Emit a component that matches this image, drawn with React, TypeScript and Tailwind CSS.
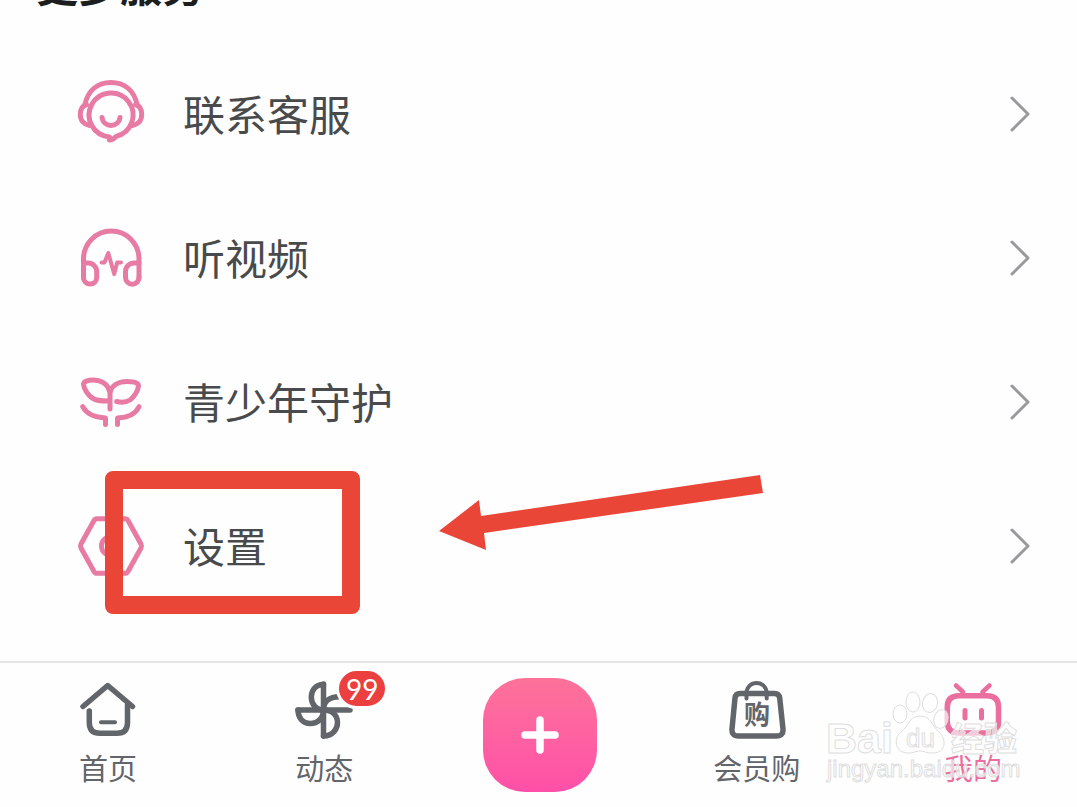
import type { ReactNode } from "react";

const iconProps = {
  fill: "none",
  stroke: "currentColor",
  strokeLinecap: "round" as const,
  strokeLinejoin: "round" as const,
  "aria-hidden": true,
};

function RowIcon({ children }: { children: ReactNode }) {
  return (
    <svg viewBox="0 0 66 66" strokeWidth={5} className="size-[66px] shrink-0 overflow-visible text-[#e87ba4]" {...iconProps}>
      {children}
    </svg>
  );
}

function NavIcon({ children }: { children: ReactNode }) {
  return (
    <svg viewBox="0 0 60 60" strokeWidth={5.5} className="size-[60px] overflow-visible" {...iconProps}>
      {children}
    </svg>
  );
}

function ServiceIcon() {
  return (
    <RowIcon>
      <path d="M31.500 59 V55.900 A22 22 0 1 1 38 55.400 Q36 58.500 31.500 59" />
      <path d="M6.800 24 C10 9 20 1.500 33 1.500 S56 9 59.200 24" />
      <path d="M8.500 23.500 C3.800 25 2.300 29 2.300 33.500 C2.300 39.500 6 43.500 11.500 44.500" />
      <path d="M57.500 23.500 C62.200 25 63.700 29 63.700 33.500 C63.700 39.500 60 43.500 54.500 44.500" />
      <path d="M24 36.500 C25.500 47 40.500 47 42 36.500" />
    </RowIcon>
  );
}

function HeadphoneIcon() {
  return (
    <RowIcon>
      <path d="M5.500 53 V34 a27.700 28 0 0 1 55.500 0 V53" />
      <path d="M5.500 38 H10 A8.500 8.500 0 0 1 18.700 46.500 V52.500 A6.600 6.600 0 0 1 5.500 52.500" />
      <path d="M61 38 H56.500 A8.500 8.500 0 0 0 47.500 46.500 V52.500 A6.700 6.700 0 0 0 61 52.500" />
      <path strokeWidth={4} d="M23.500 37.500 H26.500 L30.300 28 L36.200 49 L39.200 37.500 H43" />
    </RowIcon>
  );
}

function SproutIcon() {
  return (
    <RowIcon>
      <path d="M32 40 V23 C29.500 14 22 11 15 11 C10 11 5.500 12.500 5.500 15.500 C6 20 10 26.500 15 29.500 C19 32 24 32 29.500 32" />
      <path d="M32 23 C34 16 41 12.500 49 12.500 C55 12.500 60.500 13.500 60.500 17 C60 22 56 28 52 31 C48 33.500 43 33.500 38.700 32.500" />
      <path d="M4.700 37.700 C8 44 15 48.500 27.500 49 V55.500" />
      <path d="M61 37.700 C58 44 51 48.500 39.500 49 V55.500" />
    </RowIcon>
  );
}

function SettingsIcon() {
  return (
    <RowIcon>
      <path d="M19 5.700 H47 Q49 5.700 50 7.500 L63 31 Q64 33 63 35 L50 58.500 Q49 60.300 47 60.300 H19 Q17 60.300 16 58.500 L3 35 Q2 33 3 31 L16 7.500 Q17 5.700 19 5.700 Z" />
      <circle cx="33" cy="33" r="9.500" />
    </RowIcon>
  );
}

function HomeIcon() {
  return (
    <NavIcon>
      <path d="M5 25.500 L29.700 4.500 L54.500 25.500" />
      <path d="M11.300 30 V41.500 Q11.300 52.300 22 52.300 H39 Q49.500 52.300 49.500 41.500 V24" />
      <path strokeWidth={4} d="M23 41.300 H37" />
    </NavIcon>
  );
}

function FanIcon() {
  return (
    <NavIcon>
      <path d="M29.500 3 V55" />
      <path d="M4 29 H56" />
      <path d="M29.500 3.500 C21 3.500 17.300 10 17.300 16 C17.300 23 22 29 29.500 29" />
      <path d="M29.500 55 C39 55 43.500 48 43.500 41.500 C43.500 34 38 29 29.500 29" />
      <path d="M4 29 C4 37 9 42.500 16 42.500 C24 42.500 29.500 37 29.500 29" />
      <path d="M29.500 29 C29.500 20 36 15.700 45 15.700" />
    </NavIcon>
  );
}

function BagIcon() {
  return (
    <NavIcon>
      <path d="M13 12.500 H47.500 Q52 12.500 52.700 17 L56 48 Q56.500 55 49.500 55 H11.500 Q4.500 55 5 48 L8 17 Q8.500 12.500 13 12.500 Z" />
      <path strokeWidth={4} d="M19.500 17.500 V12.500 C19.500 -1.500 39.700 -1.500 39.700 12.500 V17.500" />
      <text x="30" y="43" textAnchor="middle" fill="currentColor" stroke="none" className="font-['Noto_Sans_CJK_SC',sans-serif] text-[26px] font-bold">购</text>
    </NavIcon>
  );
}

function TvIcon() {
  return (
    <NavIcon>
      <path strokeWidth={4.5} d="M13 4.500 L20 11 M46.500 4.500 L39.500 11" />
      <path d="M16 14.700 H44 Q55.500 14.700 55.500 26 V40.500 Q55.500 52 44 52 H16 Q4.300 52 4.300 40.500 V26 Q4.300 14.700 16 14.700 Z" />
      <path strokeWidth={5} d="M22 29.500 V37 M38.500 29.500 V37" />
    </NavIcon>
  );
}

function Watermark() {
  return (
    <svg
      viewBox="0 0 200 100"
      className="pointer-events-none absolute right-[50px] bottom-[12px] h-[100px] w-[200px] overflow-visible"
      fill="#ffffff"
      fillOpacity={0.65}
      stroke="#dedede"
      strokeWidth={1}
      aria-hidden="true"
    >
      <text x="-1" y="58" className="font-['Liberation_Sans',sans-serif] text-[43px] font-bold">Bai</text>
      <ellipse cx="73" cy="19" rx="7" ry="9" />
      <ellipse cx="86" cy="7" rx="7" ry="10" />
      <ellipse cx="103" cy="8" rx="7.5" ry="9.5" transform="rotate(12 103 8)" />
      <ellipse cx="114" cy="24" rx="7" ry="9.5" transform="rotate(16 114 24)" />
      <path d="M93 21 C82 21 81 32 74 37 C66 43 68 58 81 58 C87 58 89 56 93 56 C97 56 99 58 106 58 C119 58 120 44 112 37 C105 31 104 21 93 21 Z" />
      <text x="79" y="52" className="font-['Liberation_Sans',sans-serif] text-[26px]">du</text>
      <text x="124" y="56" className="font-['Noto_Sans_CJK_SC',sans-serif] text-[33px] font-black">经验</text>
      <text x="0" y="82" className="font-['Liberation_Sans',sans-serif] text-[24px]">jingyan.baidu.com</text>
    </svg>
  );
}

const rows = [
  { label: "联系客服", icon: <ServiceIcon /> },
  { label: "听视频", icon: <HeadphoneIcon /> },
  { label: "青少年守护", icon: <SproutIcon /> },
  { label: "设置", icon: <SettingsIcon />, marked: true },
];

function NavItem({ label, icon, active, badge }: { label: string; icon: ReactNode; active?: boolean; badge?: string }) {
  return (
    <a href="#" className={`flex flex-col items-center pt-[18px] ${active ? "text-[#eb6f9e]" : "text-[#62656a]"}`}>
      <span className="relative">
        {icon}
        {badge && (
          <span className="absolute -top-[13px] left-[42px] flex h-[41px] w-[52px] items-center justify-center rounded-full border-3 border-white bg-[#ec3f40] font-['Lato',sans-serif] text-[28px] leading-none text-white">
            {badge}
          </span>
        )}
      </span>
      <span className="mt-[6px] text-[29px] leading-10">{label}</span>
    </a>
  );
}

export default function App() {
  return (
    <div className="relative flex min-h-screen flex-col overflow-hidden bg-[#fefefe] font-['Noto_Sans_CJK_SC',sans-serif]">
      <main className="flex-1">
        <header className="h-[42px] overflow-hidden pl-9">
          <h2 className="-mt-[46px] text-[42px] leading-[60px] font-bold text-[#1c1d1f]">更多服务</h2>
        </header>
        <ul>
          {rows.map(({ label, icon, marked }) => (
            <li key={label} className="relative">
              <a href="#" className="flex h-36 items-center pr-[46px] pl-[78px]">
                {icon}
                <span className="ml-[39px] flex-1 pb-[2px] text-[42px] leading-[60px] text-[#484a4b]">{label}</span>
                <svg viewBox="0 0 22 38" className="h-[38px] w-[22px]" {...iconProps} stroke="#97999b" strokeWidth={3}>
                  <path d="M3 3 L19 19 L3 35" />
                </svg>
              </a>
              {marked && (
                <>
                  <span className="pointer-events-none absolute -top-[3px] left-[105px] h-[143px] w-[255px] rounded-lg border-18 border-[#e94638]" />
                  <svg viewBox="0 0 326 78" className="pointer-events-none absolute top-0 left-[438px] h-[78px] w-[326px]" fill="#e94638" aria-hidden="true">
                    <path d="M1 57 L41 26 L43 42 L322 1 L325 19 L46 59 L48 76 Z" />
                  </svg>
                </>
              )}
            </li>
          ))}
        </ul>
      </main>
      <nav className="h-[146px] border-t-2 border-[#e3e4e4]">
        <div className="-mr-1 grid grid-cols-5">
          <NavItem label="首页" icon={<HomeIcon />} />
          <NavItem label="动态" icon={<FanIcon />} badge="99" />
          <div className="flex justify-center pt-[15px]">
            <button type="button" aria-label="+" className="flex size-[114px] items-center justify-center rounded-[42px] bg-linear-to-b from-[#fd7299] to-[#ff4fa8] text-white">
              <svg viewBox="0 0 38 38" strokeWidth={7.5} className="size-[38px]" {...iconProps}>
                <path d="M19 4 V34 M4 19 H34" />
              </svg>
            </button>
          </div>
          <NavItem label="会员购" icon={<BagIcon />} />
          <NavItem label="我的" icon={<TvIcon />} active />
        </div>
      </nav>
      <Watermark />
    </div>
  );
}
